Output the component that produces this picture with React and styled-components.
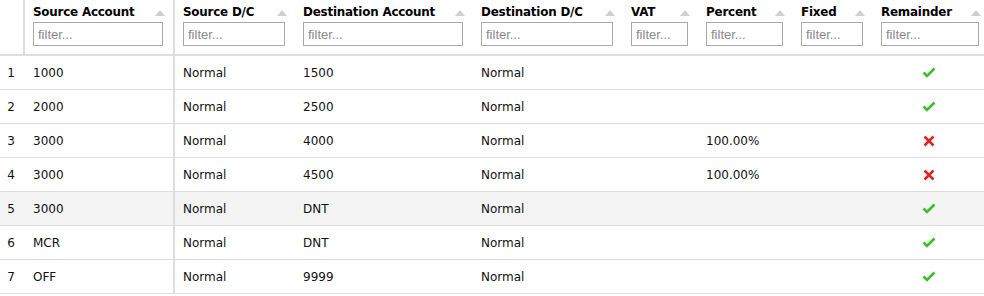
import React from "react";
import styled, { createGlobalStyle } from "styled-components";

const GlobalStyle = createGlobalStyle`
  html, body {
    margin: 0;
    padding: 0;
    background: #fff;
  }
  body {
    font-family: "DejaVu Sans", Verdana, sans-serif;
    font-size: 12px;
    color: #111;
  }
`;

const columns = [
  { key: "source", title: "Source Account", width: 150, frozen: true },
  { key: "sourceDc", title: "Source D/C", width: 120 },
  { key: "dest", title: "Destination Account", width: 178 },
  { key: "destDc", title: "Destination D/C", width: 150 },
  { key: "vat", title: "VAT", width: 75 },
  { key: "percent", title: "Percent", width: 95 },
  { key: "fixed", title: "Fixed", width: 80 },
  { key: "remainder", title: "Remainder", width: 116, center: true },
];

const rows = [
  { source: "1000", sourceDc: "Normal", dest: "1500", destDc: "Normal", percent: "", ok: true },
  { source: "2000", sourceDc: "Normal", dest: "2500", destDc: "Normal", percent: "", ok: true },
  { source: "3000", sourceDc: "Normal", dest: "4000", destDc: "Normal", percent: "100.00%", ok: false },
  { source: "3000", sourceDc: "Normal", dest: "4500", destDc: "Normal", percent: "100.00%", ok: false },
  { source: "3000", sourceDc: "Normal", dest: "DNT", destDc: "Normal", percent: "", ok: true, hover: true },
  { source: "MCR", sourceDc: "Normal", dest: "DNT", destDc: "Normal", percent: "", ok: true },
  { source: "OFF", sourceDc: "Normal", dest: "9999", destDc: "Normal", percent: "", ok: true },
];

const template = `25px ${columns.map((c) => `${c.width}px`).join(" ")}`;

const Grid = styled.div`
  width: 984px;
  overflow: hidden;
`;

const HeaderRow = styled.div`
  display: grid;
  grid-template-columns: ${template};
  height: 56px;
  border-bottom: 2px solid #dddddd;
  box-sizing: border-box;
`;

const RowNumHead = styled.div`
  border-right: 2px solid #dddddd;
`;

const HeadCell = styled.div`
  box-sizing: border-box;
  padding: 5px 10px 0 8px;
  border-right: ${({ $frozen }) => ($frozen ? "2px solid #dddddd" : "none")};
  display: flex;
  flex-direction: column;
  gap: 3px;
`;

const TitleLine = styled.div`
  display: flex;
  align-items: center;
  justify-content: space-between;
  height: 14px;
`;

const Title = styled.span`
  font-family: "DejaVu Sans", Verdana, sans-serif;
  font-weight: bold;
  font-size: 11.9px;
  letter-spacing: -0.2px;
  color: #000;
  white-space: nowrap;
`;

const SortArrow = styled.span`
  width: 0;
  height: 0;
  border-left: 5.5px solid transparent;
  border-right: 5.5px solid transparent;
  border-bottom: 6px solid #cfcfcf;
  margin-right: -2px;
  margin-top: 2px;
`;

const FilterInput = styled.input`
  box-sizing: border-box;
  width: 100%;
  height: 24px;
  border: 1px solid #aaaaaa;
  padding: 0 4px;
  font-family: "Liberation Sans", Arial, sans-serif;
  font-size: 13px;
  color: #333;
  outline: none;
  &::placeholder {
    color: #8a8a8a;
  }
`;

const Row = styled.div`
  display: grid;
  grid-template-columns: ${template};
  height: 34px;
  box-sizing: border-box;
  border-bottom: 1px solid #dddddd;
  background: ${({ $hover }) => ($hover ? "#f4f4f4" : "#fff")};
`;

const RowNum = styled.div`
  display: flex;
  align-items: center;
  justify-content: center;
  padding-right: 3px;
`;

const Cell = styled.div`
  box-sizing: border-box;
  display: flex;
  align-items: center;
  justify-content: ${({ $center }) => ($center ? "center" : "flex-start")};
  padding-left: ${({ $center }) => ($center ? "0" : "8px")};
  padding-right: ${({ $center }) => ($center ? "5px" : "0")};
  border-right: ${({ $frozen }) => ($frozen ? "2px solid #dddddd" : "none")};
  white-space: nowrap;
`;

const Check = () => (
  <svg width="14" height="11" viewBox="0 0 14 11">
    <path d="M1.5 5.5 L5 9 L12.5 1.5" fill="none" stroke="#3cbf28" strokeWidth="2.6" />
  </svg>
);

const Cross = () => (
  <svg width="12" height="12" viewBox="0 0 12 12">
    <path d="M1.5 1.5 L10.5 10.5 M10.5 1.5 L1.5 10.5" fill="none" stroke="#d9262a" strokeWidth="2.6" />
  </svg>
);

export default function App() {
  return (
    <>
      <GlobalStyle />
      <Grid>
        <HeaderRow>
          <RowNumHead />
          {columns.map((c) => (
            <HeadCell key={c.key} $frozen={c.frozen}>
              <TitleLine>
                <Title>{c.title}</Title>
                <SortArrow />
              </TitleLine>
              <FilterInput placeholder="filter..." />
            </HeadCell>
          ))}
        </HeaderRow>
        {rows.map((r, i) => (
          <Row key={i} $hover={r.hover}>
            <RowNum>{i + 1}</RowNum>
            <Cell $frozen>{r.source}</Cell>
            <Cell>{r.sourceDc}</Cell>
            <Cell>{r.dest}</Cell>
            <Cell>{r.destDc}</Cell>
            <Cell></Cell>
            <Cell>{r.percent}</Cell>
            <Cell></Cell>
            <Cell $center>{r.ok ? <Check /> : <Cross />}</Cell>
          </Row>
        ))}
      </Grid>
    </>
  );
}
